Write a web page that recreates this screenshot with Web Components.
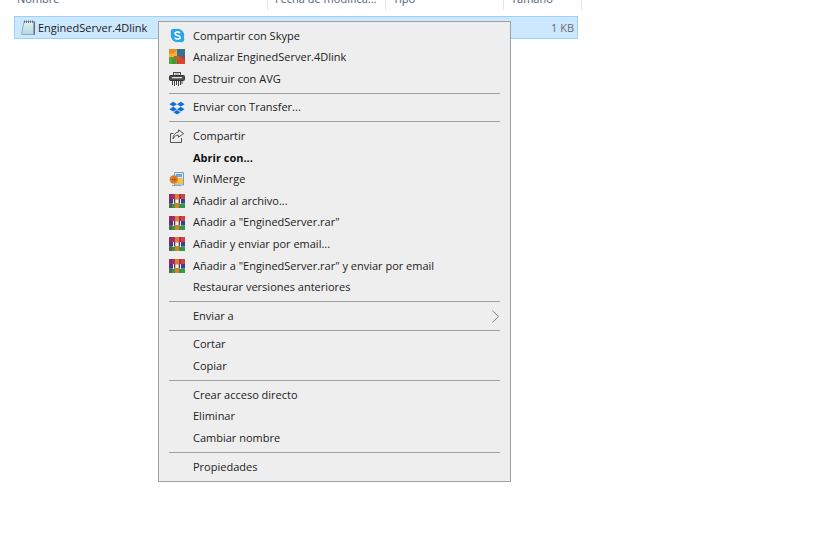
<!DOCTYPE html>
<html lang="es">
<head>
<meta charset="utf-8">
<title>Explorador</title>
<style>
  html, body { margin: 0; padding: 0; background: #fff; }
  body { width: 816px; height: 535px; overflow: hidden; position: relative; font-family: "Open Sans", "Noto Sans", sans-serif; }
</style>
</head>
<body>
<list-header>
  <col-head width="261" pad="10">Nombre</col-head>
  <col-head width="118" pad="7">Fecha de modifica...</col-head>
  <col-head width="118" pad="7">Tipo</col-head>
  <col-head width="78" pad="7">Tamaño</col-head>
</list-header>
<file-row name="EnginedServer.4Dlink" size="1 KB"></file-row>

<context-menu>
  <menu-item icon="skype">Compartir con Skype</menu-item>
  <menu-item icon="avg">Analizar EnginedServer.4Dlink</menu-item>
  <menu-item icon="shred">Destruir con AVG</menu-item>
  <menu-sep></menu-sep>
  <menu-item icon="dropbox">Enviar con Transfer...</menu-item>
  <menu-sep></menu-sep>
  <menu-item icon="share">Compartir</menu-item>
  <menu-item bold>Abrir con...</menu-item>
  <menu-item icon="winmerge">WinMerge</menu-item>
  <menu-item icon="rar">Añadir al archivo...</menu-item>
  <menu-item icon="rar">Añadir a "EnginedServer.rar"</menu-item>
  <menu-item icon="rar">Añadir y enviar por email...</menu-item>
  <menu-item icon="rar">Añadir a "EnginedServer.rar" y enviar por email</menu-item>
  <menu-item>Restaurar versiones anteriores</menu-item>
  <menu-sep></menu-sep>
  <menu-item arrow>Enviar a</menu-item>
  <menu-sep></menu-sep>
  <menu-item>Cortar</menu-item>
  <menu-item>Copiar</menu-item>
  <menu-sep></menu-sep>
  <menu-item>Crear acceso directo</menu-item>
  <menu-item>Eliminar</menu-item>
  <menu-item>Cambiar nombre</menu-item>
  <menu-sep></menu-sep>
  <menu-item>Propiedades</menu-item>
</context-menu>

<script>
const icons = {
  skype: `<svg viewBox="0 0 16 16" width="15" height="15">
    <circle cx="8" cy="8" r="7.2" fill="#2aa5e6"/>
    <circle cx="4.200" cy="4.200" r="3.400" fill="#2aa5e6"/><circle cx="11.800" cy="11.800" r="3.400" fill="#2aa5e6"/>
    <path d="M10.700 5.500C10.100 4.500 9.100 4.100 8 4.100c-1.500 0-2.700.7-2.700 1.900 0 2.500 5.500 1.400 5.500 3.800 0 1.200-1.200 2-2.800 2-1.300 0-2.300-.5-2.900-1.600" fill="none" stroke="#fff" stroke-width="1.700"/></svg>`,
  avg: `<svg viewBox="0 0 16 16" width="16" height="16">
    <rect x="0" y="0" width="8" height="8" fill="#e88c2a"/><rect x="8" y="0" width="8" height="8" fill="#3a6f8f"/>
    <rect x="0" y="8" width="8" height="7" fill="#57a63a"/><rect x="8" y="8" width="8" height="7" fill="#c8382a"/>
    <path d="M0 5 5 4 8 1v7H0z" fill="#f2b431"/><path d="M8 7 12 8 16 12v3H9z" fill="#d9472b"/><rect x="3" y="9" width="4" height="6" fill="#3f9a3c"/><rect x="5" y="7" width="5" height="4" fill="#b5652a"/></svg>`,
  shred: `<svg viewBox="0 0 16 16" width="16" height="16">
    <rect x="4.500" y="1.500" width="7" height="4" fill="#e4e4e4" stroke="#4a4a4a" stroke-width="1"/>
    <path d="M6 3h4" stroke="#888" stroke-width="1"/>
    <rect x=".5" y="4.500" width="15" height="5" rx="1" fill="#4e4e4e" stroke="#333" stroke-width="1"/>
    <rect x="3" y="6" width="10" height="1.300" fill="#e0e0e0"/>
    <path d="M3.500 10v4M5.500 10v5M7.500 10v4M9.500 10v5M11.500 10v4M13 10v3" stroke="#444" stroke-width="1"/></svg>`,
  dropbox: `<svg viewBox="0 0 16 16" width="16" height="16" fill="#0f6fdc">
    <path d="M4.200 1.800 8 4.200 4.200 6.600.4 4.200zM11.800 1.800 15.600 4.200 11.800 6.600 8 4.200zM4.200 6.800 8 9.200 4.200 11.600.4 9.200zM11.800 6.800 15.600 9.200 11.800 11.600 8 9.200zM4.400 12.200 8 10l3.600 2.200L8 14.500z"/></svg>`,
  share: `<svg viewBox="0 0 16 16" width="16" height="16" fill="none" stroke="#555" stroke-width="1">
    <path d="M12.500 10v4.500h-11V5.500h3"/><path d="M9.500 1.800 14.600 5.600 9.500 9.200V7.200C7 7 5.200 8.400 4 11c0-3.600 2-6.600 5.500-7z"/></svg>`,
  winmerge: `<svg viewBox="0 0 16 16" width="16" height="16">
    <path d="M5.500 1.500h9v12.500h-9z" fill="#dce8f3" stroke="#7f9cba" stroke-width="1"/>
    <rect x="7" y="3" width="6" height="3" fill="#6ea6d8"/><rect x="7" y="7" width="7" height="6" fill="#f1c34a"/>
    <circle cx="4.800" cy="8.500" r="4.200" fill="#e07c26"/>
    <path d="M2.500 8.500h4M5 6.700l1.800 1.800L5 10.300" fill="none" stroke="#a9561a" stroke-width="1"/>
    <path d="M3 14.500h9" stroke="#8fa4ba" stroke-width="1"/></svg>`,
  rar: `<svg viewBox="0 0 16 16" width="16" height="16">
    <rect x="0" y="1" width="16" height="5" fill="#a82e6a"/><rect x="0" y="6" width="16" height="4.500" fill="#3a3da0"/>
    <rect x="0" y="10.500" width="16" height="4.500" fill="#2e9a48"/>
    <rect x="0" y="1" width="3" height="14" fill="#7d2a55" opacity=".45"/><rect x="12" y="1" width="4" height="5" fill="#d0453a"/>
    <rect x="6" y="1" width="4" height="14" fill="#dd7f2c"/><rect x="6.500" y="6.500" width="3" height="3.500" fill="#f6f2e2"/>
    <path d="M4.500 6v5M11.500 6v5" stroke="#f0e8d0" stroke-width="1"/></svg>`,
  note: `<svg viewBox="0 0 16 16" width="16" height="16">
    <defs><linearGradient id="n" x1="0" y1="0" x2="0" y2="1"><stop offset="0" stop-color="#e4f1f1"/><stop offset="1" stop-color="#b0d8e8"/></linearGradient></defs>
    <path d="M4 1.500h10v13H1.500z" fill="url(#n)" stroke="#9aabb2" stroke-width="1"/>
    <path d="M4.500 .5v2.500M6.500 .5v2.500M8.500 .5v2.500M10.500 .5v2.500M12.500 .5v2.500" stroke="#5c6a72" stroke-width=".9"/>
    <path d="M14.300 1.500v13.300" stroke="#59646b" stroke-width="1.200"/></svg>`
};

class ListHeader extends HTMLElement {
  constructor() {
    super();
    this.attachShadow({mode: 'open'}).innerHTML = `
      <style>
        :host { display: flex; height: 10px; overflow: hidden; padding-left: 7px; }
      </style>
      <slot></slot>`;
  }
}
customElements.define('list-header', ListHeader);

class ColHead extends HTMLElement {
  constructor() {
    super();
    this.attachShadow({mode: 'open'}).innerHTML = `
      <style>
        :host { display: block; box-sizing: border-box; height: 10px; padding-left: var(--p); width: var(--w);
          border-right: 1px solid #e5e5e5; color: #4c607a; font: 11px/10px "Open Sans", sans-serif; }
        div { margin-top: -6px; white-space: nowrap; }
      </style>
      <div><slot></slot></div>`;
    this.style.setProperty('--w', this.getAttribute('width') + 'px');
    this.style.setProperty('--p', this.getAttribute('pad') + 'px');
  }
}
customElements.define('col-head', ColHead);

class FileRow extends HTMLElement {
  constructor() {
    super();
    this.attachShadow({mode: 'open'}).innerHTML = `
      <style>
        :host { display: flex; align-items: center; box-sizing: border-box; width: 564px; height: 23px;
          margin: 6px 0 0 14px; padding: 0 3px 0 5px; background: #cce8ff; border: 1px solid #99d1ff;
          font: 11px "Open Sans", sans-serif; color: #222; }
        .icon { display: flex; margin-right: 2px; }
        .name { flex: 1; padding-bottom: 1px; }
        .size { color: #6d6d6d; padding-bottom: 1px; }
      </style>
      <span class="icon">${icons.note}</span>
      <span class="name">${this.getAttribute('name')}</span>
      <span class="size">${this.getAttribute('size')}</span>`;
  }
}
customElements.define('file-row', FileRow);

class ContextMenu extends HTMLElement {
  constructor() {
    super();
    this.attachShadow({mode: 'open'}).innerHTML = `
      <style>
        :host { display: block; position: absolute; left: 158px; top: 21px; width: 353px; height: 461px;
          box-sizing: border-box; padding: 3px 2px 0 2px; background: #eeeeee; border: 1px solid #a0a0a0;
          color: #222; font: 11px "Open Sans", sans-serif; }
      </style>
      <slot></slot>`;
  }
}
customElements.define('context-menu', ContextMenu);

class MenuItem extends HTMLElement {
  constructor() {
    super();
    const icon = icons[this.getAttribute('icon')] || '';
    const arrow = this.hasAttribute('arrow')
      ? `<svg class="arrow" viewBox="0 0 10 14" width="9" height="13"><path d="M1.500 .5 8.500 7 1.500 13.500" fill="none" stroke="#707070" stroke-width="1"/></svg>`
      : '';
    this.attachShadow({mode: 'open'}).innerHTML = `
      <style>
        :host { display: flex; align-items: center; height: 21.62px; white-space: nowrap; }
        :host([bold]) { font-weight: 700; color: #111; }
        .icon { display: flex; justify-content: center; width: 16px; margin-left: 8px; margin-right: 8px; }
        .label { flex: 1; padding-bottom: 1.5px; }
        .arrow { margin-right: 8px; }
      </style>
      <span class="icon">${icon}</span>
      <span class="label"><slot></slot></span>
      ${arrow}`;
  }
}
customElements.define('menu-item', MenuItem);

class MenuSep extends HTMLElement {
  constructor() {
    super();
    this.attachShadow({mode: 'open'}).innerHTML = `
      <style>
        :host { display: block; height: 7px; box-sizing: border-box; padding-top: 3px; margin: 0 8px 0 8px; }
        div { height: 1px; background: #a0a0a0; }
      </style>
      <div></div>`;
  }
}
customElements.define('menu-sep', MenuSep);
</script>
</body>
</html>
